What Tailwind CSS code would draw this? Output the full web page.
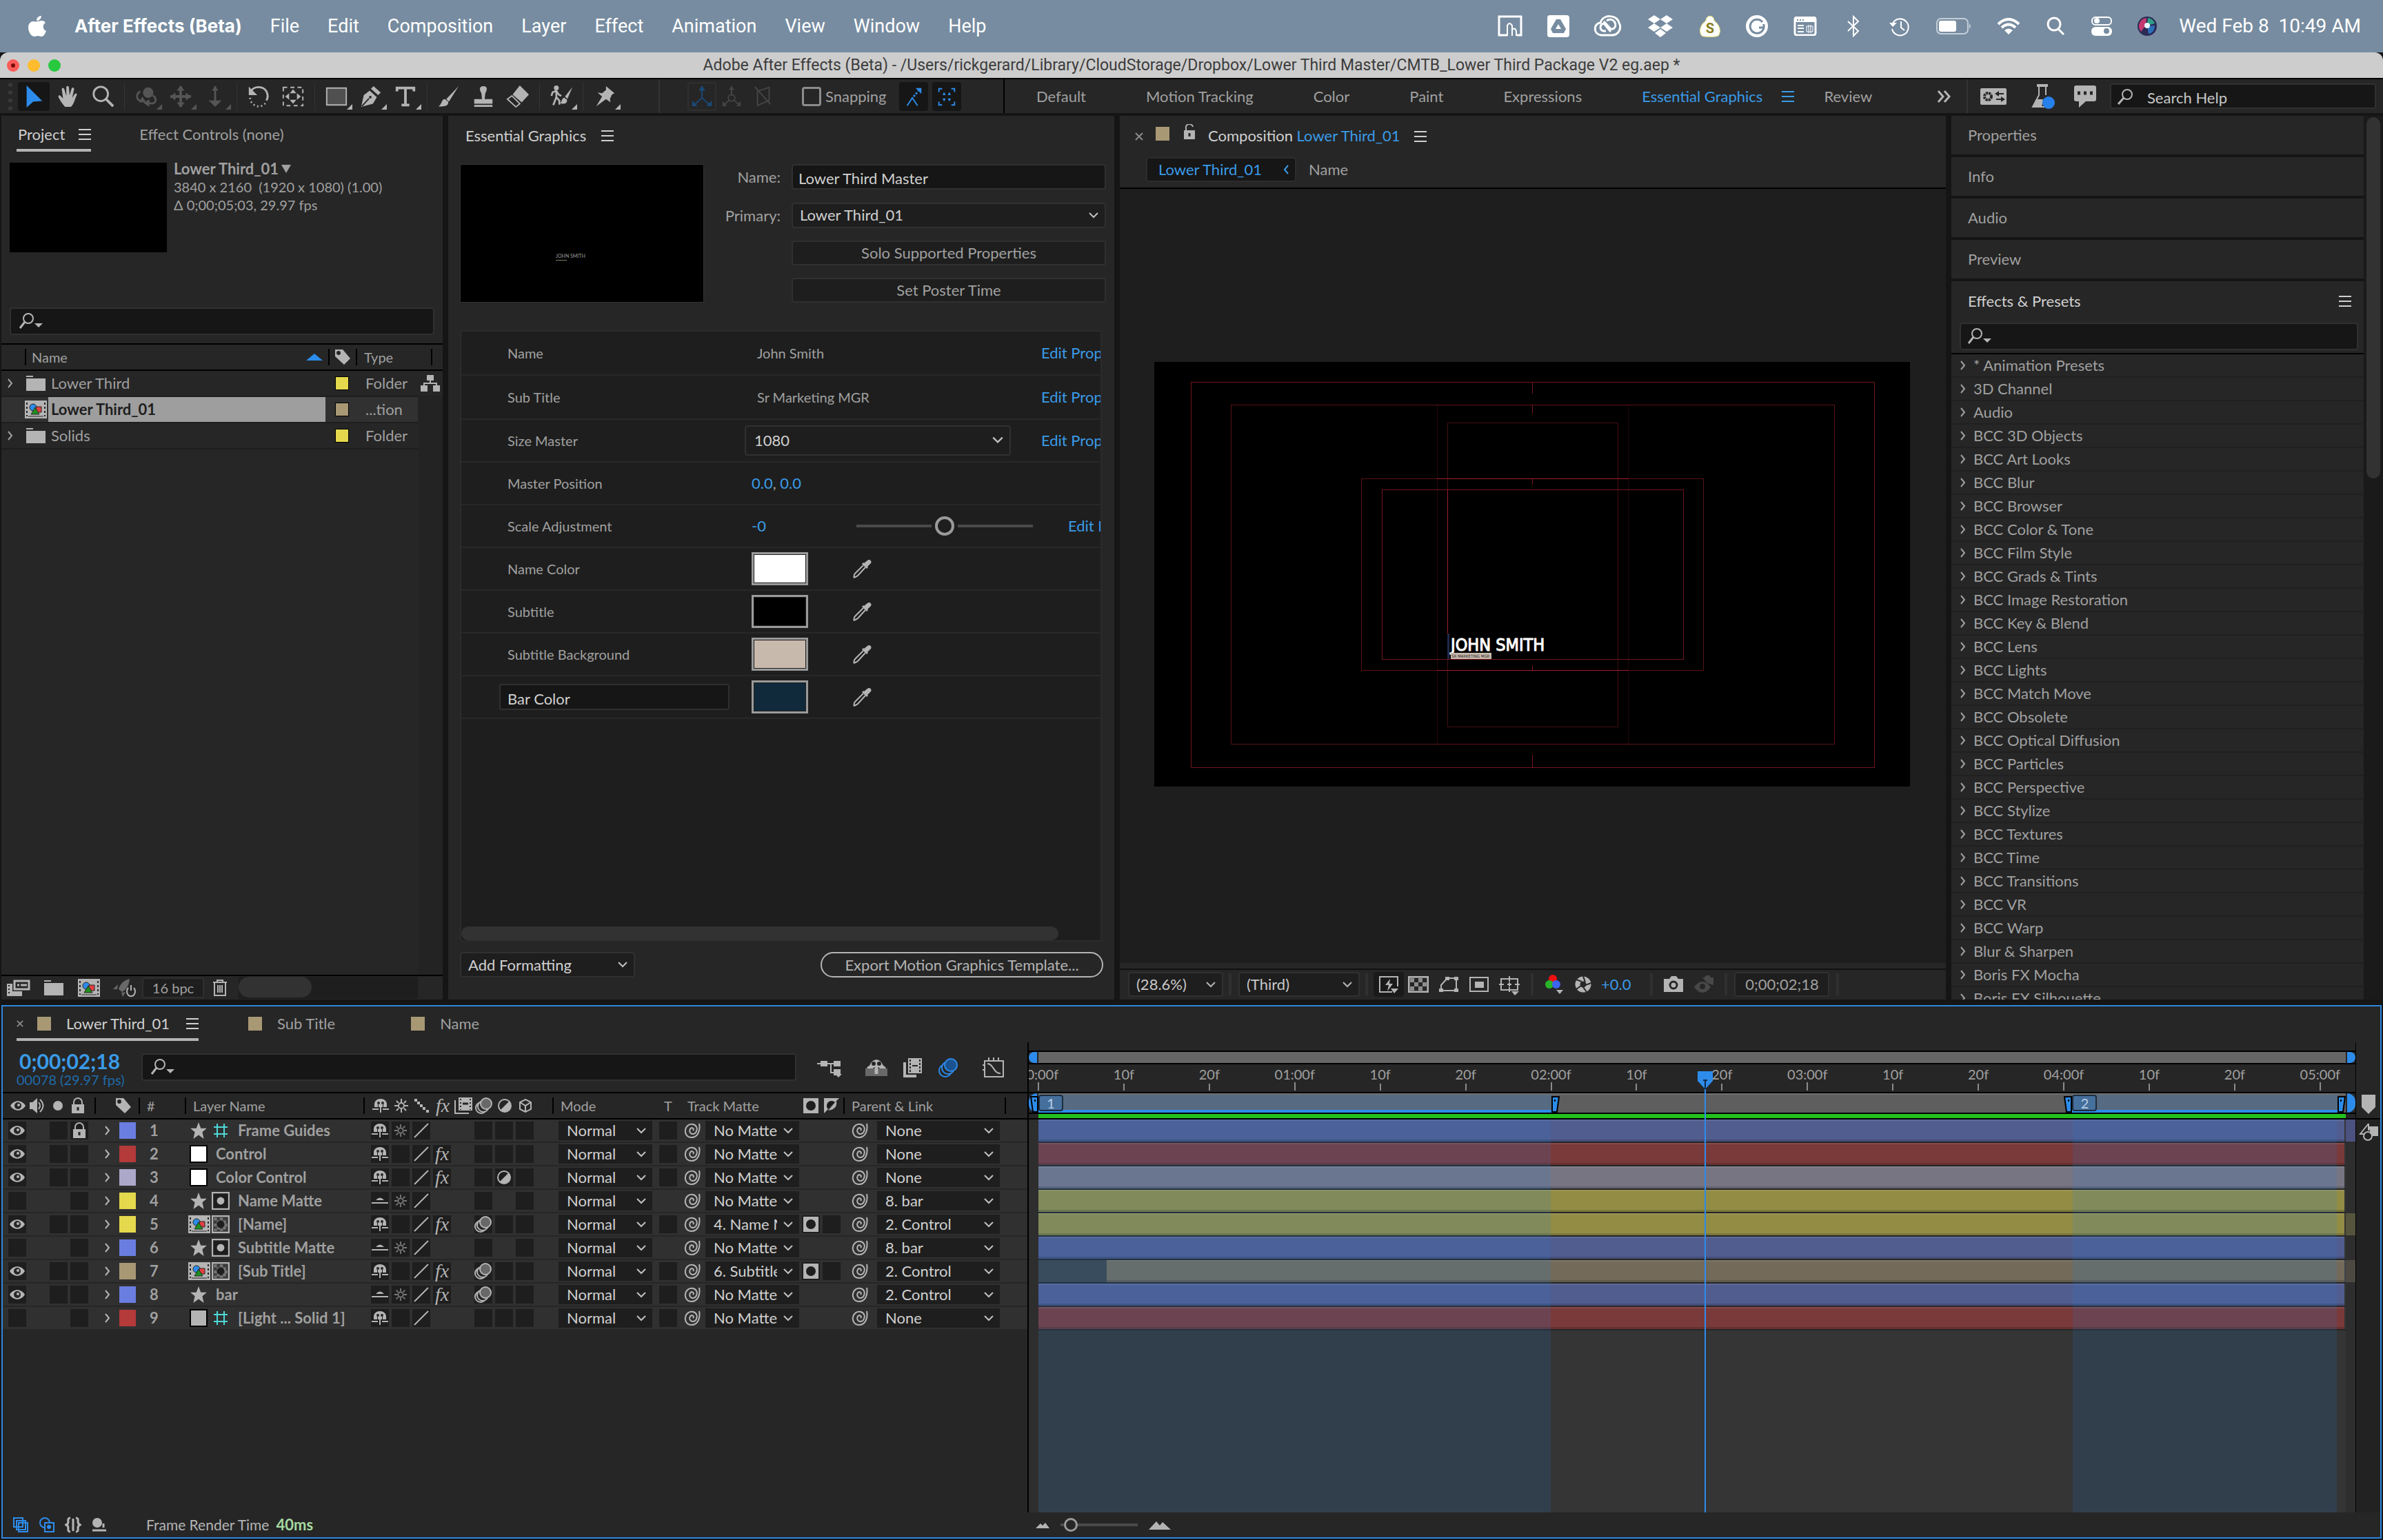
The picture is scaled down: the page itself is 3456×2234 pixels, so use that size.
<!DOCTYPE html>
<html lang="en">
<head>
    <meta charset="UTF-8">
    <meta name="viewport" content="width=device-width, initial-scale=1.0">
    <title>Adobe After Effects (Beta)</title>
    <script src="https://cdn.jsdelivr.net/npm/@tailwindcss/browser@4"></script>
</head>
<body class="h-screen flex flex-col overflow-hidden bg-[#151515] font-['Lato','Noto_Sans',sans-serif] text-[22px] leading-[26px] text-[#a0a0a0]">

    <!-- Icon sprite -->
    <svg class="hidden" aria-hidden="true">
        <symbol id="i-menu" viewBox="0 0 18 16"><path d="M0 1h18M0 8h18M0 15h18" stroke="currentColor" stroke-width="2"/></symbol>
        <symbol id="i-chev" viewBox="0 0 16 16"><path d="M2 5l6 6 6-6" fill="none" stroke="currentColor" stroke-width="2"/></symbol>
        <symbol id="i-right" viewBox="0 0 10 16"><path d="M2 2l5 6-5 6" fill="none" stroke="currentColor" stroke-width="2"/></symbol>
        <symbol id="i-close" viewBox="0 0 12 12"><path d="M1 1l10 10M11 1L1 11" stroke="currentColor" stroke-width="2"/></symbol>
        <symbol id="i-find" viewBox="0 0 34 26"><circle cx="13" cy="9" r="7" fill="none" stroke="currentColor" stroke-width="2"/><path d="M8 14L1 23" stroke="currentColor" stroke-width="3"/><path d="M22 16h12l-6 6z" fill="currentColor"/></symbol>
        <symbol id="i-mag" viewBox="0 0 24 24"><circle cx="15" cy="9" r="7" fill="none" stroke="currentColor" stroke-width="2"/><path d="M10 14L2 23" stroke="currentColor" stroke-width="3"/></symbol>
        <symbol id="i-folder" viewBox="0 0 28 24"><path d="M0 1h10v2H0zM0 5h28v18H0z" fill="currentColor"/></symbol>
        <symbol id="i-comp" viewBox="0 0 32 26"><path d="M0 0h32v26H0z" fill="#b4b4b4"/><path d="M3 3v20M29 3v20" stroke="#262626" stroke-width="2" stroke-dasharray="3 3"/><path d="M5 23h22" stroke="#262626" stroke-width="1"/><circle cx="12" cy="10" r="5" fill="#2d8ceb" stroke="#262626"/><path d="M16 9h8v8h-8z" fill="#e34040" stroke="#262626"/><path d="M15 10l6 10H9z" fill="#1f8f1f" stroke="#262626"/></symbol>
        <symbol id="i-tag" viewBox="0 0 24 24"><path d="M1 1h11l11 13-9 9L1 11z" fill="currentColor"/><circle cx="6" cy="6" r="3" fill="#262626"/></symbol>
        <symbol id="i-flow" viewBox="0 0 28 24"><path d="M9 0h10v8H9zM0 15h10v9H0zM18 15h10v9H18z" fill="currentColor"/><path d="M14 8v4M5 15v-3h18v3" fill="none" stroke="currentColor" stroke-width="2"/></symbol>
        <symbol id="i-interp" viewBox="0 0 34 24"><path d="M11 2h21v12H11z" fill="none" stroke="currentColor" stroke-width="3"/><path d="M15 8h3M20 8h9" stroke="currentColor" stroke-width="3"/><path d="M0 6h8v11h14v7H0z" fill="currentColor"/><path d="M3 8v14" stroke="#262626" stroke-width="2" stroke-dasharray="2 3"/></symbol>
        <symbol id="i-rocket" viewBox="0 0 34 26"><path d="M24 0c-9 2-14 8-16 15l5 4c6-3 10-9 11-19zM7 8l-7 7h6zM12 20l2 6 4-7z" fill="#686868"/><path d="M22 13a6 7 0 1 0 8 0M26 9v8" fill="none" stroke="currentColor" stroke-width="2"/></symbol>
        <symbol id="i-trash" viewBox="0 0 22 26"><path d="M1 5h20M7 5V2h8v3M3 5v19h16V5M8 9v11M11 9v11M14 9v11" fill="none" stroke="currentColor" stroke-width="2"/></symbol>
        <symbol id="i-dropper" viewBox="0 0 28 28"><path d="M16 9L4 21c-2 2-1 5-2 6 2-1 4-1 6-3l11-12" fill="none" stroke="currentColor" stroke-width="2"/><path d="M14 7l7 7 2-2-1-1 5-5c2-3-2-7-5-4l-5 4-1-1z" fill="currentColor"/></symbol>
        <symbol id="i-lock" viewBox="0 0 20 24"><path d="M4 11V7a6 6 0 0 1 12 0v4" fill="none" stroke="currentColor" stroke-width="2"/><path d="M1 10h18v13H1z" fill="currentColor"/><path d="M10 14v5" stroke="#262626" stroke-width="3"/></symbol>
        <symbol id="i-unlock" viewBox="0 0 20 24"><path d="M4 11V6a5 5 0 0 1 10-2" fill="none" stroke="currentColor" stroke-width="2"/><path d="M1 9h16v13H1z" fill="currentColor"/><path d="M9 13v5" stroke="#262626" stroke-width="3"/></symbol>
        <symbol id="i-eye" viewBox="0 0 22 16"><path d="M0 8C5-1 17-1 22 8 17 17 5 17 0 8z" fill="currentColor"/><circle cx="11" cy="8" r="5" fill="#262626"/><circle cx="12" cy="7" r="2" fill="currentColor"/></symbol>
        <symbol id="i-audio" viewBox="0 0 24 24"><path d="M0 7h4l7-6v22l-7-6H0z" fill="currentColor"/><path d="M13 7q4 5 0 10M15 3q9 9 0 18" fill="none" stroke="currentColor" stroke-width="2"/></symbol>
        <symbol id="i-dot" viewBox="0 0 14 14"><circle cx="7" cy="7" r="7" fill="currentColor"/></symbol>
        <symbol id="i-shy" viewBox="0 0 24 20"><path d="M3 12V8C3 3 7 0 12 0s9 3 9 8v4h-5V8h-1v4H9V8H8v4z" fill="currentColor"/><circle cx="9" cy="6" r="2" fill="#262626"/><circle cx="15" cy="6" r="2" fill="#262626"/><path d="M0 15h9M15 15h9M12 10v10" stroke="currentColor" stroke-width="2"/></symbol>
        <symbol id="i-shyoff" viewBox="0 0 24 20"><path d="M6 9q6-7 12 0z" fill="currentColor"/><path d="M0 13h24" stroke="currentColor" stroke-width="2"/></symbol>
        <symbol id="i-sun" viewBox="0 0 22 22"><circle cx="11" cy="11" r="4" fill="none" stroke="currentColor" stroke-width="2"/><path d="M11 1v5M11 16v5M1 11h5M16 11h5M4 4l3 3M15 15l3 3M4 18l3-3M15 7l3-3" stroke="currentColor" stroke-width="2"/></symbol>
        <symbol id="i-steps" viewBox="0 0 22 22"><path d="M0 1h4v4H0zM4 5h4v4H4zM8 9h4v4H8zM12 13h4v4h-4zM17 17h4v4h-4z" fill="currentColor"/></symbol>
        <symbol id="i-slash" viewBox="0 0 22 22"><path d="M1 21L21 1" stroke="currentColor" stroke-width="2"/></symbol>
        <symbol id="i-frames" viewBox="0 0 26 24"><path d="M6 0h20v19H6z" fill="currentColor"/><path d="M1 4v19h20" fill="none" stroke="currentColor" stroke-width="2"/><path d="M9 2v16M23 2v16" stroke="#262626" stroke-width="2" stroke-dasharray="2 3"/><path d="M12 9h8" stroke="#262626" stroke-width="3"/></symbol>
        <symbol id="i-mblur" viewBox="0 0 26 24"><circle cx="9" cy="15" r="8" fill="#262626" stroke="currentColor" stroke-width="2"/><circle cx="12" cy="13" r="8" fill="#262626" stroke="currentColor" stroke-width="2"/><circle cx="16" cy="9" r="8" fill="#686868" stroke="currentColor" stroke-width="2"/></symbol>
        <symbol id="i-mblurb" viewBox="0 0 28 28"><circle cx="10" cy="18" r="9" fill="#262626" stroke="#2d8ceb" stroke-width="2"/><circle cx="14" cy="14" r="9" fill="#262626" stroke="#2d8ceb" stroke-width="2"/><circle cx="18" cy="10" r="9" fill="#1b5390" stroke="#2d8ceb" stroke-width="2"/></symbol>
        <symbol id="i-adj" viewBox="0 0 20 20"><circle cx="10" cy="10" r="9" fill="none" stroke="currentColor" stroke-width="2"/><path d="M17 3A10 10 0 0 1 3 17z" fill="currentColor"/></symbol>
        <symbol id="i-cube" viewBox="0 0 20 20"><path d="M10 1l8 4v10l-8 4-8-4V5zM2 5l8 5 8-5M10 10v9" fill="none" stroke="currentColor" stroke-width="2"/></symbol>
        <symbol id="i-star" viewBox="0 0 24 24"><path d="M12 1l3 8h8l-6 5 2 9-7-5-7 5 2-9-6-5h8z" fill="currentColor"/></symbol>
        <symbol id="i-guide" viewBox="0 0 20 20"><path d="M5 0v20M15 0v20M0 5h20M0 15h20" stroke="#4fd8d8" stroke-width="2"/></symbol>
        <symbol id="i-matte" viewBox="0 0 24 24"><path d="M1 1h22v22H1z" fill="#1e1e1e" stroke="currentColor" stroke-width="2"/><circle cx="12" cy="12" r="5" fill="currentColor"/></symbol>
        <symbol id="i-matted" viewBox="0 0 24 24"><path d="M1 1h22v22H1z" fill="#3c3c3c" stroke="currentColor" stroke-width="2"/><path d="M3 3h4v4H3zM11 3h4v4h-4zM7 7h4v4H7zM15 7h4v4h-4zM3 11h4v4H3zM17 11h4v4h-4zM7 15h4v4H7zM15 15h4v4h-4zM11 18h4v3h-4zM3 18h4v3H3z" fill="#747474"/><circle cx="12" cy="12" r="5" fill="#1e1e1e"/></symbol>
        <symbol id="i-hole" viewBox="0 0 22 22"><path d="M0 0h22v22H0z" fill="currentColor"/><circle cx="11" cy="11" r="7" fill="#1e1e1e"/></symbol>
        <symbol id="i-holeinv" viewBox="0 0 22 22"><path d="M0 0h22L0 22z" fill="currentColor"/><path d="M16 6A7 7 0 0 0 6 16z" fill="#1a1a1a"/><path d="M18 4q2 12-12 14z" fill="currentColor"/></symbol>
        <symbol id="i-whip" viewBox="0 0 24 24"><path d="M22 2c2 10-2 20-11 20C4 22 1 16 2 11 3 5 8 2 13 3c5 1 7 6 5 10-1 4-6 5-8 3-3-2-2-7 1-8 2 0 4 2 2 4" fill="none" stroke="currentColor" stroke-width="2"/></symbol>

        <!-- tools -->
        <symbol id="t-select" viewBox="0 0 34 36"><path d="M6 1l24 24-14 1-10 9z" fill="#2d8ceb"/></symbol>
        <symbol id="t-hand" viewBox="0 0 34 36"><path d="M12 34C7 28 4 23 2 19c-1-3 2-4 4-1l3 3L7 7c0-3 3-3 4 0l3 10V4c0-3 4-3 4 0l1 12 3-10c1-3 4-2 4 1l-3 13 4-6c2-2 4 0 3 2-3 6-4 14-9 18z" fill="currentColor"/></symbol>
        <symbol id="t-zoom" viewBox="0 0 34 36"><circle cx="14" cy="14" r="11" fill="none" stroke="currentColor" stroke-width="3"/><path d="M22 22l11 11" stroke="currentColor" stroke-width="4"/></symbol>
        <symbol id="t-orbit" viewBox="0 0 34 36"><circle cx="20" cy="12" r="8" fill="currentColor"/><path d="M8 10c-8 5-6 14 2 15M27 16c8 6 5 15-6 12" fill="none" stroke="currentColor" stroke-width="3"/><path d="M6 27l11 0-6-9zM22 34v-12l-9 6z" fill="currentColor"/></symbol>
        <symbol id="t-pan" viewBox="0 0 34 36"><path d="M17 2v32M1 18h32" stroke="currentColor" stroke-width="4"/><path d="M17 1l6 8H11zM17 35l6-8H11zM1 18l8-6v12zM33 18l-8-6v12z" fill="currentColor"/></symbol>
        <symbol id="t-dolly" viewBox="0 0 34 36"><path d="M17 2v28" stroke="currentColor" stroke-width="3"/><path d="M17 2l5 7H12zM17 34l10-10H7z" fill="currentColor"/></symbol>
        <symbol id="t-rotate" viewBox="0 0 34 36"><path d="M5 10C11 1 24 2 29 10c3 6 2 11 0 14" fill="none" stroke="currentColor" stroke-width="3"/><path d="M2 3v13h13z" fill="currentColor"/><path d="M4 20c1 14 18 18 25 6" fill="none" stroke="currentColor" stroke-width="3" stroke-dasharray="2 4"/></symbol>
        <symbol id="t-anchor" viewBox="0 0 34 36"><path d="M2 4h30v28H2z" fill="none" stroke="currentColor" stroke-width="2" stroke-dasharray="6 5"/><path d="M17 7l5 6H12zM17 29l5-6H12zM5 18l6-5v10zM29 18l-6-5v10z" fill="currentColor"/></symbol>
        <symbol id="t-rect" viewBox="0 0 34 36"><path d="M2 5h30v26H2z" fill="#505050" stroke="currentColor" stroke-width="2"/></symbol>
        <symbol id="t-pen" viewBox="0 0 34 36"><path d="M21 2l11 10-4 4-11-10zM15 9l11 10-6 10L2 34 6 16z" fill="currentColor"/><path d="M3 33l11-12" stroke="#262626" stroke-width="2"/><circle cx="16" cy="19" r="2" fill="#262626"/></symbol>
        <symbol id="t-type" viewBox="0 0 34 36"><path d="M4 10V5h26v5M17 5v26M11 31h12" fill="none" stroke="currentColor" stroke-width="4"/></symbol>
        <symbol id="t-brush" viewBox="0 0 34 36"><path d="M32 2L13 22l4 4zM11 22c-6 0-4 8-10 11 8 1 16 0 15-7z" fill="currentColor"/></symbol>
        <symbol id="t-stamp" viewBox="0 0 34 36"><path d="M17 2c7 0 6 6 3 11l-1 9h12v7H3v-7h12l-1-9c-3-5-4-11 3-11zM3 31h28v3H3z" fill="currentColor"/></symbol>
        <symbol id="t-eraser" viewBox="0 0 34 36"><path d="M20 1l14 14-11 12L9 15z" fill="currentColor"/><path d="M8 17l12 12-6 5L1 22z" fill="none" stroke="currentColor" stroke-width="2"/></symbol>
        <symbol id="t-roto" viewBox="0 0 38 36"><circle cx="11" cy="4" r="4" fill="currentColor"/><path d="M11 9v11M3 17l2-6 6-2 4 6 4 2M11 19l-5 13M11 19l5 6v6" fill="none" stroke="currentColor" stroke-width="3"/><path d="M37 3L25 18l4 4zM24 20c-5 1-3 6-7 9 6 2 13 0 11-6z" fill="currentColor"/></symbol>
        <symbol id="t-pin" viewBox="0 0 34 36"><path d="M19 2l13 11-4 2-3 7 1 5-7-5L4 33l9-15-7-6 7 1 6-5z" fill="currentColor"/></symbol>
        <symbol id="t-axis" viewBox="0 0 34 36"><path d="M17 4v17M17 20L5 31M17 20l12 11" stroke="currentColor" stroke-width="2"/><path d="M17 1l5 8H12zM2 33v-9l8 9zM32 33v-9l-8 9z" fill="currentColor"/></symbol>
        <symbol id="t-world" viewBox="0 0 34 36"><path d="M17 4v13M13 24l-8 7M21 24l8 7" stroke="currentColor" stroke-width="2"/><circle cx="17" cy="20" r="5" fill="none" stroke="currentColor" stroke-width="2"/><path d="M17 1l4 7h-8zM3 33v-8l7 8zM31 33v-8l-7 8z" fill="currentColor"/></symbol>
        <symbol id="t-view" viewBox="0 0 34 36"><path d="M8 10l18-6v20L8 32zM4 3l24 27" fill="none" stroke="currentColor" stroke-width="2"/></symbol>
        <symbol id="t-snap" viewBox="0 0 34 36"><path d="M7 32l8-12 8 12" fill="none" stroke="currentColor" stroke-width="2"/><path d="M17 18l7-8" stroke="currentColor" stroke-width="3" stroke-dasharray="3 2"/><path d="M20 5h9v9z" fill="currentColor"/></symbol>
        <symbol id="t-snapbox" viewBox="0 0 34 36"><path d="M5 11V6h5M24 6h5v5M5 26v5h5M24 31h5v-5M13 15v-3M21 15v-3M13 25v-3M21 25v-3M11 15h4M19 15h4M11 22h4M19 22h4" fill="none" stroke="currentColor" stroke-width="2"/></symbol>
    </svg>

    <!-- macOS menu bar -->
    <header class="h-[76px] shrink-0 flex items-center bg-[#778ca0] text-white font-['Roboto',sans-serif] text-[27px] pl-10 pr-8">
        <svg class="w-7 h-8 mr-10" viewBox="0 0 28 32"><path d="M20 1c0 4-3 7-7 7 0-4 3-7 7-7zM14 9c2 0 4-1 6-1 3 0 5 1 6 3-5 3-4 10 1 12-2 5-4 8-7 8-2 0-3-1-5-1s-3 1-5 1C5 31 1 24 1 18c0-6 4-9 7-9 2 0 4 1 6 0z" fill="#fff"/></svg>
        <nav class="flex gap-[41px]">
            <a href="#" class="font-['Inter',sans-serif] text-[26px] font-bold">After Effects (Beta)</a>
            <a href="#">File</a>
            <a href="#">Edit</a>
            <a href="#">Composition</a>
            <a href="#">Layer</a>
            <a href="#">Effect</a>
            <a href="#">Animation</a>
            <a href="#">View</a>
            <a href="#">Window</a>
            <a href="#">Help</a>
        </nav>
        <div class="ml-auto flex items-center gap-9">
            <svg class="w-9 h-8" viewBox="0 0 36 32"><path d="M14 29H2V2h32v27h-6" fill="none" stroke="#fff" stroke-width="3"/><path d="M14 30V15q3-6 7 0v15M21 21q5-4 6 3v6" fill="none" stroke="#fff" stroke-width="2"/></svg>
            <svg class="size-8" viewBox="0 0 32 32"><rect width="32" height="32" rx="4" fill="#fff"/><path d="M13 6h6l8 14-3 6H8l-3-6z" fill="#778ca0"/><path d="M16 13l4 7h-8z" fill="#fff"/></svg>
            <svg class="w-10 h-8" viewBox="0 0 40 32"><path d="M10 29C-2 27-1 12 9 11 13-2 33-1 36 11c5 9-2 18-10 18z" fill="none" stroke="#fff" stroke-width="3"/><path d="M24 24L14 12c-6 1-7 10 0 11h3M18 8c10-7 18 8 9 12h-3L14 9" fill="none" stroke="#fff" stroke-width="3"/></svg>
            <svg class="w-10 h-8" viewBox="0 0 40 32"><path d="M11 0l9 6-9 6-9-6zM29 0l9 6-9 6-9-6zM11 12l9 6-9 6-9-6zM29 12l9 6-9 6-9-6zM20 20l8 6-8 6-8-6z" fill="#fff"/></svg>
            <svg class="size-8" viewBox="0 0 32 32"><path d="M10 8c0-9 12-9 12 0 6 4 12 14 6 22-4 2-20 2-24 0-6-8 0-18 6-22z" fill="#fff" stroke="#e6dc6a"/><text x="16" y="26" text-anchor="middle" font-family="Roboto" font-size="20" font-weight="bold" fill="#8a7f20">S</text></svg>
            <svg class="size-8" viewBox="0 0 32 32"><circle cx="16" cy="16" r="16" fill="#fff"/><path d="M24 10a10 10 0 1 0 2 8h-7M26 13v6" fill="none" stroke="#778ca0" stroke-width="3"/></svg>
            <svg class="w-9 h-7" viewBox="0 0 36 28"><rect x="3" y="1" width="30" height="26" rx="3" fill="none" stroke="#fff" stroke-width="3"/><path d="M3 2h30v6H3z" fill="#fff"/><path d="M6 5h2M10 5h2M14 5h2" stroke="#778ca0" stroke-width="2"/><path d="M7 13h9M7 17h9M7 22h9" stroke="#fff" stroke-width="2"/><path d="M20 14h9v8h-9zM23 12v12M26 12v12" fill="none" stroke="#fff" stroke-width="1"/></svg>
            <svg class="size-8" viewBox="0 0 32 32"><path d="M8 9l15 14-7 7V2l7 7L8 23" fill="none" stroke="#fff" stroke-width="2"/></svg>
            <svg class="size-8" viewBox="0 0 32 32"><path d="M5 12a12 12 0 1 1-1 8M17 9v9l5 4" fill="none" stroke="#fff" stroke-width="2"/><path d="M0 11h11l-6 6z" fill="#fff"/></svg>
            <svg class="w-13 h-6" viewBox="0 0 52 24"><rect x="1" y="1" width="45" height="22" rx="6" fill="none" stroke="#c4ced8" stroke-width="2"/><rect x="4" y="4" width="25" height="16" rx="3" fill="#fff"/><path d="M48 8q4 4 0 8z" fill="#c4ced8"/></svg>
            <svg class="w-[34px] h-6" viewBox="0 0 34 24"><path d="M2 9Q17-5 32 9M7 14q10-9 20 0" fill="none" stroke="#fff" stroke-width="4"/><path d="M11 18q6-5 12 0l-6 6z" fill="#fff"/></svg>
            <svg class="w-[30px] h-7" viewBox="0 0 30 28"><circle cx="13" cy="11" r="9" fill="none" stroke="#fff" stroke-width="3"/><path d="M19 18l8 8" stroke="#fff" stroke-width="3"/></svg>
            <svg class="w-8 h-7" viewBox="0 0 32 28"><rect x="2" y="1" width="28" height="11" rx="5" fill="none" stroke="#fff" stroke-width="2"/><circle cx="9" cy="6" r="4" fill="#fff"/><rect x="1" y="15" width="30" height="13" rx="6" fill="#fff"/><circle cx="23" cy="21" r="4" fill="#778ca0"/></svg>
            <svg class="size-7" viewBox="0 0 28 28"><circle cx="14" cy="14" r="14" fill="#2a2a55"/><path d="M13 2a12 12 0 0 0-8 20l7-9z" fill="#c23a70"/><path d="M15 2a12 12 0 0 1 10 8l-11 3z" fill="#2f9e86"/><path d="M25 13c0 7-4 12-9 12l-2-11z" fill="#2c6fb8"/><circle cx="14" cy="13" r="4" fill="#e8f4ff"/></svg>
            <span class="whitespace-pre -ml-1 text-[28px]">Wed Feb 8  10:49 AM</span>
        </div>
    </header>

    <!-- Window title bar -->
    <div class="h-[39px] shrink-0 relative flex items-center justify-center bg-[#cdcdcd] border-b-2 border-black rounded-t-xl font-['Roboto',sans-serif] text-[23px] text-[#3c3c3c]">
        <div class="absolute left-2.5 flex gap-3">
            <span class="size-[18px] rounded-full bg-[#fc5b57] flex items-center justify-center"><span class="size-1.5 rounded-full bg-[#7a0d0a]"></span></span>
            <span class="size-[18px] rounded-full bg-[#fdbc2e]"></span>
            <span class="size-[18px] rounded-full bg-[#28c83f]"></span>
        </div>
        <h1>Adobe After Effects (Beta) - /Users/rickgerard/Library/CloudStorage/Dropbox/Lower Third Master/CMTB_Lower Third Package V2 eg.aep *</h1>
    </div>

    <!-- Tools -->
    <div class="h-[49px] shrink-0 flex bg-[#262626] mb-1 text-[#b4b4b4]">
        <div id="tools" class="w-[957px] flex items-center pl-3 border-r-2 border-[#343434]"></div>
        <div class="w-[500px] flex items-center pl-10 border-r-2 border-black">
            <button class="w-[42px] h-[42px] flex items-center justify-center rounded border-2 border-[#2f2f2f] text-[#1b4a78]" aria-label="Local axis"><svg class="w-8 h-[34px]"><use href="#t-axis"/></svg></button>
            <button class="w-11 flex justify-center text-[#454545]" aria-label="World axis"><svg class="w-8 h-[34px]"><use href="#t-world"/></svg></button>
            <button class="w-12 flex justify-center text-[#454545]" aria-label="View axis"><svg class="w-8 h-[34px]"><use href="#t-view"/></svg></button>
            <label class="ml-8 flex items-center gap-1.5 text-[#a0a0a0]"><input type="checkbox" class="appearance-none size-7 rounded border-3 border-[#8c8c8c]">Snapping</label>
            <button class="ml-[18px] w-[42px] h-[42px] flex items-center justify-center rounded bg-[#161616] text-[#2d8ceb]" aria-label="Snap edges"><svg class="w-8 h-[34px]"><use href="#t-snap"/></svg></button>
            <button class="ml-1.5 w-[42px] h-[42px] flex items-center justify-center rounded bg-[#161616] text-[#2d8ceb]" aria-label="Snap box"><svg class="w-8 h-[34px]"><use href="#t-snapbox"/></svg></button>
        </div>
        <nav class="flex items-center gap-[87px] pl-[46px] text-[#a0a0a0]">
            <a href="#">Default</a>
            <a href="#">Motion Tracking</a>
            <a href="#">Color</a>
            <a href="#">Paint</a>
            <a href="#">Expressions</a>
            <span class="flex items-center gap-7 -mr-11 text-[#3a9be8]"><a href="#">Essential Graphics</a><svg class="w-[18px] h-4"><use href="#i-menu"/></svg></span>
            <a href="#">Review</a>
        </nav>
        <div class="ml-auto flex items-center pr-2.5">
            <button class="mr-5" aria-label="More workspaces"><svg class="w-6 h-5" viewBox="0 0 24 20"><path d="M3 2l7 8-7 8M12 2l7 8-7 8" fill="none" stroke="currentColor" stroke-width="3"/></svg></button>
            <span class="w-0.5 h-[49px] bg-[#343434] mr-[18px]"></span>
            <svg class="w-[38px] h-6 mr-9" viewBox="0 0 38 24"><rect width="38" height="24" rx="2" fill="currentColor"/><circle cx="11" cy="12" r="5" fill="none" stroke="#262626" stroke-width="4" stroke-dasharray="3 1"/><path d="M23 8h11M23 16h11" stroke="#262626" stroke-width="2"/><path d="M27 4v8l-6-4zM30 12v8l6-4z" fill="#262626"/></svg>
            <svg class="w-[34px] h-9 mr-7" viewBox="0 0 34 36"><path d="M8 2h16" stroke="currentColor" stroke-width="4"/><path d="M11 3v13L2 33h20M21 3v13" fill="none" stroke="currentColor" stroke-width="2"/><path d="M8 22h9l-2 12H2z" fill="currentColor"/><circle cx="25" cy="27" r="9" fill="#2680eb"/></svg>
            <svg class="w-8 h-9 mr-5" viewBox="0 0 32 36"><path d="M3 2h26q3 0 3 3v17q0 3-3 3H17L7 34v-9H3q-3 0-3-3V5q0-3 3-3z" fill="currentColor"/><path d="M5 13h4M14 13h4M23 13h4" stroke="#262626" stroke-width="5"/></svg>
            <label class="w-[386px] h-[37px] flex items-center gap-5 pl-2 rounded bg-[#161616] border-2 border-[#303030]">
                <svg class="size-6"><use href="#i-mag"/></svg>
                <input type="text" placeholder="Search Help" aria-label="Search Help" class="w-64 pt-1 bg-transparent placeholder:text-[#c8c8c8]">
            </label>
        </div>
    </div>

    <!-- Upper panels -->
    <main class="flex-1 min-h-0 grid grid-cols-[640px_966px_minmax(0,1fr)_626px] grid-rows-[minmax(0,1fr)] gap-x-2 pl-0.5 mb-2">

        <!-- Project -->
        <section class="flex flex-col bg-[#262626]">
            <div class="h-[52px] shrink-0 flex items-end">
                <div class="ml-[22px] pl-0.5 h-[46px] flex items-center gap-5 border-b-4 border-[#b4b4b4] text-[#d0d0d0]"><h2>Project</h2><svg class="w-[18px] h-4"><use href="#i-menu"/></svg></div>
                <button class="h-[46px] pb-1 ml-[70px]">Effect Controls (none)</button>
            </div>
            <div class="flex gap-2.5 mt-4 ml-3 h-[130px]">
                <div class="w-[228px] h-[130px] bg-black"></div>
                <div class="text-[20px] -mt-1">
                    <p class="text-[22px] font-bold flex items-center gap-1">Lower Third_01<svg class="w-3.5 h-3.5" viewBox="0 0 14 14"><path d="M0 1h14L7 13z" fill="currentColor"/></svg></p>
                    <p class="whitespace-pre">3840 x 2160  (1920 x 1080) (1.00)</p>
                    <p>Δ 0;00;05;03, 29.97 fps</p>
                </div>
            </div>
            <label class="mt-[80px] ml-3 mr-3 h-10 shrink-0 flex items-center pl-3 gap-2 rounded bg-[#161616] border-2 border-[#303030] text-[#b4b4b4]">
                <svg class="w-[34px] h-[26px]"><use href="#i-find"/></svg><input type="text" aria-label="Search project" class="flex-1 bg-transparent">
            </label>
            <div class="flex mt-3 flex-1 border-b-2 border-black">
                <table class="w-[604px] self-start table-fixed border-separate border-spacing-0 text-left">
                    <colgroup><col class="w-[34px]"><col class="w-[440px]"><col class="w-[42px]"><col></colgroup>
                    <thead class="text-[20px]">
                        <tr class="h-10">
                            <th class="border-y-2 border-black"></th>
                            <th class="border-y-2 border-black p-0 font-normal"><div class="h-6 leading-6 border-l-2 border-black pl-2 pr-2 flex items-center justify-between">Name<svg class="w-6 h-2.5" viewBox="0 0 24 10"><path d="M0 10L12 0l12 10z" fill="#2d8ceb"/></svg></div></th>
                            <th class="border-y-2 border-black p-0"><div class="h-6 border-x-2 border-black flex justify-center text-[#b4b4b4]"><svg class="size-6"><use href="#i-tag"/></svg></div></th>
                            <th class="border-y-2 border-black p-0 pl-2.5 font-normal">Type</th>
                        </tr>
                    </thead>
                    <tbody>
                        <tr class="h-[38px]">
                            <td class="border-b-2 border-[#1e1e1e] p-0 pl-2"><svg class="w-2.5 h-4"><use href="#i-right"/></svg></td>
                            <td class="border-b-2 border-[#1e1e1e] p-0"><div class="flex items-center gap-2 pl-0.5"><svg class="w-7 h-6 text-[#b4b4b4]"><use href="#i-folder"/></svg>Lower Third</div></td>
                            <td class="border-b-2 border-[#1e1e1e] p-0"><div class="size-5 ml-2.5 bg-[#e4d84c] border border-black"></div></td>
                            <td class="border-b-2 border-[#1e1e1e] p-0 pl-3">Folder</td>
                        </tr>
                        <tr class="h-[38px] bg-[#313131]">
                            <td class="border-b-2 border-[#1e1e1e] p-0"></td>
                            <td class="border-b-2 border-[#1e1e1e] p-0"><div class="flex items-center"><svg class="w-8 h-[26px]"><use href="#i-comp"/></svg><span class="ml-0.5 flex-1 h-9 leading-9 pl-1 mr-1 bg-[#9e9e9e] text-[#1e1e1e] font-bold">Lower Third_01</span></div></td>
                            <td class="border-b-2 border-[#1e1e1e] p-0"><div class="size-5 ml-2.5 bg-[#a89874] border border-black"></div></td>
                            <td class="border-b-2 border-[#1e1e1e] p-0 pl-3">...tion</td>
                        </tr>
                        <tr class="h-[38px]">
                            <td class="border-b-2 border-[#1e1e1e] p-0 pl-2"><svg class="w-2.5 h-4"><use href="#i-right"/></svg></td>
                            <td class="border-b-2 border-[#1e1e1e] p-0"><div class="flex items-center gap-2 pl-0.5"><svg class="w-7 h-6 text-[#b4b4b4]"><use href="#i-folder"/></svg>Solids</div></td>
                            <td class="border-b-2 border-[#1e1e1e] p-0"><div class="size-5 ml-2.5 bg-[#e4d84c] border border-black"></div></td>
                            <td class="border-b-2 border-[#1e1e1e] p-0 pl-3">Folder</td>
                        </tr>
                    </tbody>
                </table>
                <div class="flex-1 bg-[#232323]">
                    <div class="h-10 pl-[19px] pt-1.5 bg-[#262626] border-y-2 border-black"><div class="w-0.5 h-6 bg-black"></div></div>
                    <button class="w-full h-9 flex items-center justify-center bg-[#262626] text-[#b4b4b4]" aria-label="Flowchart"><svg class="w-7 h-6"><use href="#i-flow"/></svg></button>
                </div>
            </div>
            <div class="h-[34px] shrink-0 flex items-center pl-2 text-[#b4b4b4]">
                <button aria-label="Interpret footage"><svg class="w-[34px] h-6"><use href="#i-interp"/></svg></button>
                <button class="ml-5" aria-label="New folder"><svg class="w-7 h-6"><use href="#i-folder"/></svg></button>
                <button class="ml-5" aria-label="New composition"><svg class="w-[34px] h-[26px]"><use href="#i-comp"/></svg></button>
                <button class="ml-[18px]" aria-label="Project settings"><svg class="w-[34px] h-[26px]"><use href="#i-rocket"/></svg></button>
                <button class="ml-2 w-[90px] h-[30px] leading-6 rounded bg-[#1e1e1e] border-2 border-[#2f2f2f] text-[20px] text-[#a0a0a0]">16 bpc</button>
                <button class="ml-3" aria-label="Delete"><svg class="w-[22px] h-[26px]"><use href="#i-trash"/></svg></button>
                <div class="ml-4 w-[260px] h-8 bg-[#1e1e1e]"><div class="w-[106px] h-[30px] rounded-full bg-[#323232]"></div></div>
            </div>
        </section>

        <!-- Essential Graphics -->
        <section class="flex flex-col bg-[#262626] pl-[17px] pr-3">
            <div class="h-[58px] shrink-0 flex items-center gap-[22px] pl-2 text-[#d0d0d0]"><h2>Essential Graphics</h2><svg class="w-[18px] h-4"><use href="#i-menu"/></svg></div>
            <div class="flex mt-3">
                <div class="w-[354px] h-[201px] bg-black border border-[#333] relative">
                    <div class="absolute left-[138px] top-[126px] text-[7px] leading-3 text-[#9a9a9a]">JOHN SMITH<div class="w-4 h-px bg-[#7a7a6a]"></div></div>
                </div>
                <div class="flex-1 ml-4 grid grid-cols-[95px_1fr] gap-x-4 gap-y-[17px]">
                    <label for="egp-name" class="text-right leading-[38px]">Name:</label>
                    <input id="egp-name" type="text" value="Lower Third Master" class="h-[37px] rounded bg-[#161616] border-2 border-[#303030] pl-2 pt-1 text-[#d0d0d0]">
                    <label for="egp-primary" class="text-right leading-[38px]">Primary:</label>
                    <div class="relative">
                        <select id="egp-primary" class="appearance-none w-full h-[37px] rounded bg-[#1e1e1e] border-2 border-[#303030] pl-2.5 text-[#d0d0d0]"><option>Lower Third_01</option></select>
                        <svg class="absolute right-2.5 top-2.5 size-4 text-[#c0c0c0]"><use href="#i-chev"/></svg>
                    </div>
                    <button class="col-start-2 h-9 rounded bg-[#1e1e1e] border-2 border-[#303030]">Solo Supported Properties</button>
                    <button class="col-start-2 h-9 rounded bg-[#1e1e1e] border-2 border-[#303030]">Set Poster Time</button>
                </div>
            </div>
            <div class="mt-10 mr-1.5 flex-1 flex flex-col justify-between overflow-hidden rounded bg-[#1e1e1e] border-2 border-[#2b2b2b]">
                <div class="text-[20px]">
                    <div class="h-16 grid grid-cols-[421px_420px_1fr] items-center border-b-2 border-[#282828]"><span class="pl-[67px]">Name</span><span class="pl-2">John Smith</span><a href="#" class="whitespace-nowrap text-[22px] text-[#3a9be8]">Edit Prop</a></div>
                    <div class="h-16 grid grid-cols-[421px_420px_1fr] items-center border-b-2 border-[#282828]"><span class="pl-[67px]">Sub Title</span><span class="pl-2">Sr Marketing MGR</span><a href="#" class="whitespace-nowrap text-[22px] text-[#3a9be8]">Edit Prop</a></div>
                    <div class="h-[62px] grid grid-cols-[411px_430px_1fr] items-center border-b-2 border-[#282828]"><label for="size-master" class="pl-[67px]">Size Master</label>
                        <div class="relative w-[386px]">
                            <select id="size-master" class="appearance-none w-full h-11 rounded bg-[#1e1e1e] border-2 border-[#303030] pl-3 text-[22px] text-[#d0d0d0]"><option>1080</option></select>
                            <svg class="absolute right-2.5 top-3 size-[18px] text-[#c0c0c0]"><use href="#i-chev"/></svg>
                        </div>
                        <a href="#" class="whitespace-nowrap text-[22px] text-[#3a9be8]">Edit Prop</a></div>
                    <div class="h-[62px] grid grid-cols-[421px_1fr] items-center border-b-2 border-[#282828]"><span class="pl-[67px]">Master Position</span><span class="text-[22px] text-[#3a9be8]">0.0<span class="text-[#a0a0a0]">,</span> 0.0</span></div>
                    <div class="h-[62px] grid grid-cols-[421px_152px_307px_1fr] items-center border-b-2 border-[#282828]"><label for="scale-adj" class="pl-[67px]">Scale Adjustment</label><span class="text-[22px] text-[#3a9be8]">-0</span><input id="scale-adj" type="range" value="50" class="appearance-none w-64 h-1 bg-[#4a4a4a] [&::-webkit-slider-thumb]:appearance-none [&::-webkit-slider-thumb]:size-7 [&::-webkit-slider-thumb]:rounded-full [&::-webkit-slider-thumb]:bg-[#1e1e1e] [&::-webkit-slider-thumb]:border-4 [&::-webkit-slider-thumb]:border-[#9a9a9a] [&::-webkit-slider-thumb]:shadow-[0_0_0_5px_#1e1e1e]"><a href="#" class="whitespace-nowrap text-[22px] text-[#3a9be8]">Edit P</a></div>
                    <div id="swatches"></div>
                </div>
                <div class="w-[866px] h-5 rounded-full bg-[#323232]"></div>
            </div>
            <div class="h-[84px] shrink-0 flex items-start justify-between pt-[15px]">
                <div class="relative">
                    <select aria-label="Add Formatting" class="appearance-none w-[254px] h-[37px] rounded bg-[#1e1e1e] border-2 border-[#303030] pl-2.5 text-[#d0d0d0]"><option>Add Formatting</option></select>
                    <svg class="absolute right-2.5 top-2.5 size-4 text-[#c0c0c0]"><use href="#i-chev"/></svg>
                </div>
                <button class="mr-1 w-[410px] h-[37px] rounded-full border-2 border-[#b4b4b4] text-[#b4b4b4]">Export Motion Graphics Template...</button>
            </div>
        </section>

        <!-- Composition viewer -->
        <section class="flex flex-col bg-[#262626]">
            <div class="h-[54px] shrink-0 flex items-end pb-3 pl-[22px] text-[#d0d0d0]">
                <button aria-label="Close" class="mb-1.5"><svg class="size-3 text-[#8c8c8c]"><use href="#i-close"/></svg></button>
                <span class="ml-[18px] mb-1.5 size-5 bg-[#a89874]"></span>
                <svg class="ml-5 mb-1.5 w-5 h-6 text-[#b4b4b4]"><use href="#i-unlock"/></svg>
                <h2 class="ml-4">Composition <span class="text-[#3a9be8]">Lower Third_01</span></h2>
                <svg class="ml-5 mb-1 w-[18px] h-4"><use href="#i-menu"/></svg>
            </div>
            <div class="h-[50px] shrink-0 flex items-center pl-[38px] pb-2.5">
                <button class="w-[218px] h-9 mt-2 flex items-center justify-between pl-4 pr-2 rounded bg-[#161616] border-2 border-[#2c2c2c] text-[#3a9be8]">Lower Third_01<svg class="w-2.5 h-4 rotate-180"><use href="#i-right"/></svg></button>
                <button class="ml-[18px] mt-2">Name</button>
            </div>
            <div class="flex-1 min-h-0 pl-[50px] pr-[52px] pb-1.5 flex items-center justify-center border-t-2 border-black bg-[#1e1e1e]">
                <svg class="w-full" viewBox="0 0 1096 616">
                    <rect width="1096" height="616"/>
                    <g fill="none" stroke="#7d1820" shape-rendering="crispEdges">
                        <rect x="53" y="29" width="991" height="559" opacity=".9"/>
                        <rect x="111" y="62" width="875" height="492" opacity=".7"/>
                        <rect x="300" y="169" width="496" height="278" opacity=".7"/>
                        <rect x="330" y="185" width="437" height="246" opacity=".9"/>
                        <rect x="410" y="62" width="277" height="492" opacity=".3"/>
                        <rect x="425" y="88" width="247" height="441" opacity=".55"/>
                        <path d="M548 29v17M548 62v13M548 169v9M548 440v7M548 570v18"/>
                        <path d="M410 169h277M410 447h277M425 185v246" stroke="#a01c2c"/>
                    </g>
                    <rect x="425" y="394" width="3" height="37" fill="#22284a"/>
                    <text x="430" y="419" font-family="'DejaVu Sans Condensed', sans-serif" font-size="25" fill="#fff" stroke="#fff" stroke-width="1">JOHN SMITH</text>
                    <rect x="430" y="422" width="59" height="9" fill="#c8b9ad"/>
                    <text x="431" y="429" font-family="'DejaVu Sans Condensed', sans-serif" font-size="6" fill="#222">SR MARKETING MGR</text>
                </svg>
            </div>
            <div class="h-[53px] shrink-0 flex items-center pt-2 pl-3 border-t-8 border-[#262626] text-[#b4b4b4] shadow-[inset_0_2px_0_#111]">
                <div class="relative -mt-2">
                    <select aria-label="Magnification" class="appearance-none w-[138px] h-9 rounded bg-[#1e1e1e] border-2 border-[#303030] pl-2.5 text-[#c8c8c8]"><option>(28.6%)</option></select>
                    <svg class="absolute right-2.5 top-2.5 size-4"><use href="#i-chev"/></svg>
                </div>
                <span class="ml-2 w-1 h-8 -mt-2 bg-[#303030]"></span>
                <div class="relative ml-2.5 -mt-2">
                    <select aria-label="Resolution" class="appearance-none w-[176px] h-9 rounded bg-[#1e1e1e] border-2 border-[#303030] pl-2.5 text-[#c8c8c8]"><option>(Third)</option></select>
                    <svg class="absolute right-2.5 top-2.5 size-4"><use href="#i-chev"/></svg>
                </div>
                <span class="ml-2 w-1 h-8 -mt-2 bg-[#303030]"></span>
                <div class="flex items-center gap-[14px] ml-2 -mt-2">
                    <button aria-label="Fast previews" class="w-11 h-9 -mr-2 flex items-center justify-center rounded bg-[#1a1a1a]"><svg class="w-[30px] h-[28px]" viewBox="0 0 30 28"><path d="M20 25H2V3h26v14" fill="none" stroke="currentColor" stroke-width="2"/><path d="M17 6l-7 9h5l-2 9 8-11h-5z" fill="currentColor"/><path d="M18 20h11l-6 7z" fill="currentColor"/></svg></button>
                    <button aria-label="Transparency grid"><svg class="w-[30px] h-6" viewBox="0 0 30 24"><path d="M1 1h28v22H1z" fill="none" stroke="currentColor" stroke-width="3"/><path d="M3 3h6v6H3zM15 3h6v6h-6zM9 9h6v6H9zM21 9h6v6h-6zM3 15h6v6H3zM15 15h6v6h-6z" fill="#8c8c8c"/></svg></button>
                    <button aria-label="Mask visibility"><svg class="w-[30px] h-6" viewBox="0 0 30 24"><path d="M4 21V13L13 3h13v18z" fill="none" stroke="currentColor" stroke-width="2"/><path d="M10 1h6v5h-6zM23 1h6v5h-6zM1 18h6v5H1zM23 18h6v5h-6z" fill="currentColor"/></svg></button>
                    <button aria-label="Region of interest"><svg class="w-[30px] h-6" viewBox="0 0 30 24"><path d="M2 2h26v20H2z" fill="none" stroke="currentColor" stroke-width="2"/><path d="M9 8h13v9H9z" fill="currentColor"/></svg></button>
                    <button aria-label="Guides" class="pt-1"><svg class="w-[30px] h-7" viewBox="0 0 30 28"><path d="M3 4h24v16H3zM15 0v8M15 16v7M0 12h7M23 12h7M12 12h6M15 9v6" fill="none" stroke="currentColor" stroke-width="2"/><path d="M18 22h11l-6 6z" fill="currentColor"/></svg></button>
                </div>
                <span class="ml-4 w-1 h-8 -mt-2 bg-[#303030]"></span>
                <button aria-label="Channels" class="ml-4 -mt-2"><svg class="w-7 h-7" viewBox="0 0 28 28"><circle cx="12" cy="6" r="6" fill="#f01010"/><circle cx="7" cy="14" r="6" fill="#28b428"/><circle cx="17" cy="14" r="6" fill="#3c64f0"/><path d="M17 22h10l-5 6z" fill="currentColor"/></svg></button>
                <button aria-label="Reset exposure" class="ml-4 -mt-2"><svg class="size-6" viewBox="0 0 24 24"><circle cx="12" cy="12" r="8" fill="none" stroke="currentColor" stroke-width="7"/><path d="M12 0l3 9M24 10l-9 3M17 23l-5-7M2 19l7-5M2 5l8 3" stroke="#262626" stroke-width="2"/></svg></button>
                <span class="ml-3.5 text-[#3a9be8] -mt-2">+0.0</span>
                <span class="ml-7 w-1 h-8 -mt-2 bg-[#303030]"></span>
                <button aria-label="Snapshot" class="ml-4 -mt-2"><svg class="w-7 h-6" viewBox="0 0 28 24"><path d="M0 4h8l3-4h7l3 4h7v19H0z" fill="currentColor"/><circle cx="14" cy="13" r="5" fill="none" stroke="#262626" stroke-width="3"/></svg></button>
                <button aria-label="Show snapshot" class="ml-4 -mt-2 text-[#484848]"><svg class="w-7 h-[26px]" viewBox="0 0 28 26"><path d="M0 17q12-16 24 0-12 16-24 0z" fill="currentColor"/><circle cx="12" cy="16" r="4" fill="#262626"/><path d="M12 3h3l2-3h5l2 3h4v11l-9-3z" fill="currentColor"/></svg></button>
                <span class="ml-4 w-1 h-8 -mt-2 bg-[#303030]"></span>
                <button class="ml-2.5 w-[138px] h-9 rounded bg-[#1e1e1e] border-2 border-[#303030] text-[#a0a0a0] -mt-2">0;00;02;18</button>
                <span class="ml-2.5 w-1 h-8 -mt-2 bg-[#303030]"></span>
            </div>
        </section>

        <!-- Right dock -->
        <section class="flex">
            <div class="w-[598px] flex flex-col">
                <h2 class="h-14 shrink-0 leading-[56px] pl-6 mb-1 bg-[#262626]">Properties</h2>
                <h2 class="h-14 shrink-0 leading-[56px] pl-6 mb-1 bg-[#262626]">Info</h2>
                <h2 class="h-14 shrink-0 leading-[56px] pl-6 mb-1 bg-[#262626]">Audio</h2>
                <h2 class="h-14 shrink-0 leading-[56px] pl-6 mb-1 bg-[#262626]">Preview</h2>
                <div class="flex-1 min-h-0 flex flex-col overflow-hidden bg-[#262626]">
                    <div class="h-[58px] shrink-0 flex items-center justify-between pl-6 pr-[18px] text-[#d0d0d0]"><h2>Effects &amp; Presets</h2><svg class="w-[18px] h-4"><use href="#i-menu"/></svg></div>
                    <label class="mt-0.5 ml-3 mr-2 h-10 shrink-0 flex items-center pl-2.5 gap-2 rounded bg-[#161616] border-2 border-[#303030] text-[#b4b4b4]">
                        <svg class="w-[34px] h-[26px]"><use href="#i-find"/></svg><input type="text" aria-label="Search effects" class="flex-1 bg-transparent">
                    </label>
                    <ul id="presets" class="mt-1 border-t-2 border-black"></ul>
                </div>
            </div>
            <div class="flex-1 bg-[#1a1a1a] pt-0.5 pl-1"><div class="w-5 h-[524px] rounded-full bg-[#323232]"></div></div>
        </section>
    </main>

    <!-- Timeline -->
    <section class="h-[774px] shrink-0 mx-0.5 mb-0.5 flex flex-col bg-[#262626] border-2 border-[#2f86dc]">
        <div class="h-[52px] shrink-0 flex items-start">
            <div class="ml-5 h-[50px] pt-1 flex items-center border-b-4 border-[#b4b4b4] text-[#d0d0d0]">
                <button aria-label="Close"><svg class="size-2.5 text-[#8c8c8c]"><use href="#i-close"/></svg></button>
                <span class="ml-5 size-5 bg-[#a89874]"></span>
                <h2 class="ml-[22px]">Lower Third_01</h2>
                <svg class="ml-6 w-[18px] h-4"><use href="#i-menu"/></svg>
            </div>
            <button class="ml-[72px] h-[50px] flex items-center gap-[22px]"><span class="size-5 bg-[#a89874]"></span>Sub Title</button>
            <button class="ml-[110px] h-[50px] flex items-center gap-[22px]"><span class="size-5 bg-[#a89874]"></span>Name</button>
        </div>
        <div class="flex-1 min-h-0 flex">
            <!-- Layer list -->
            <div class="w-[1486px] shrink-0">
                <div class="h-[72px] flex items-start pl-5 text-[#b4b4b4]">
                    <div class="w-[181px] pl-1 pt-3">
                        <p class="text-[30px] leading-[30px] font-bold text-[#3a9be8]">0;00;02;18</p>
                        <p class="text-[20px] leading-6 -ml-1 text-[#1f6aa8]">00078 (29.97 fps)</p>
                    </div>
                    <label class="mt-4 w-[950px] h-10 flex items-center pl-3 gap-2 rounded bg-[#161616] border-2 border-[#303030]">
                        <svg class="w-[34px] h-[26px]"><use href="#i-find"/></svg><input type="text" aria-label="Search layers" class="flex-1 bg-transparent">
                    </label>
                    <div class="ml-[30px] mt-[22px] flex items-center">
                        <svg class="w-9 h-7" viewBox="0 0 36 28"><path d="M0 8h32M20 8v13h8" fill="none" stroke="currentColor" stroke-width="2"/><path d="M5 4h10v8H5zM24 4h10v8H24zM24 16h10v9H24z" fill="currentColor"/><path d="M26 23h10l-5 5z" fill="currentColor"/></svg>
                        <svg class="ml-[34px] w-8 h-6" viewBox="0 0 32 24"><path d="M0 13h32v11H0z" fill="#686868"/><path d="M2 13c1-4 4-3 5-6 4-9 14-9 18 0 1 3 4 2 5 6h-9l-2-2h-6l-2 2z" fill="currentColor"/><circle cx="12" cy="6" r="3" fill="#262626"/><circle cx="20" cy="6" r="3" fill="#262626"/><path d="M16 11v10" stroke="currentColor" stroke-width="5"/></svg>
                        <svg class="ml-[22px] w-7 h-7" viewBox="0 0 28 28"><path d="M8 0h20v22H8z" fill="currentColor"/><path d="M3 6v20h17" fill="none" stroke="currentColor" stroke-width="4"/><path d="M11 2v18M25 2v18" stroke="#262626" stroke-width="2" stroke-dasharray="3 2"/><path d="M14 11h8" stroke="#262626" stroke-width="2"/></svg>
                        <svg class="ml-6 size-7"><use href="#i-mblurb"/></svg>
                        <svg class="ml-9 w-8 h-[30px]" viewBox="0 0 32 30"><path d="M3 5h27v23H3z" fill="none" stroke="currentColor" stroke-width="2"/><path d="M7 9c9 0 9 15 19 14M9 0v5M16 0v5M23 0v5M0 11h3M0 18h3" fill="none" stroke="currentColor" stroke-width="2"/></svg>
                    </div>
                </div>
                <table class="w-full table-fixed border-separate border-spacing-0 text-left">
                    <colgroup><col class="w-[135px]"><col class="w-[64px]"><col class="w-[67px]"><col class="w-[259px]"><col class="w-[274px]"><col class="w-[422px]"><col class="w-[234px]"><col></colgroup>
                    <thead class="text-[20px] text-[#a0a0a0]">
                        <tr class="h-10">
                            <th class="p-0 border-y-2 border-black"><div class="h-6 pl-[11px] flex items-center gap-2.5 border-r-2 border-black text-[#b4b4b4]"><svg class="w-[22px] h-4"><use href="#i-eye"/></svg><svg class="w-6 h-6 -ml-1"><use href="#i-audio"/></svg><svg class="w-3.5 h-3.5 mr-0.5"><use href="#i-dot"/></svg><svg class="w-5 h-6"><use href="#i-lock"/></svg></div></th>
                            <th class="p-0 border-y-2 border-black"><div class="h-6 pl-7 border-r-2 border-black text-[#b4b4b4]"><svg class="size-6"><use href="#i-tag"/></svg></div></th>
                            <th class="p-0 border-y-2 border-black font-normal"><div class="h-6 leading-6 pl-2.5 border-r-2 border-black">#</div></th>
                            <th class="p-0 border-y-2 border-black font-normal"><div class="h-6 leading-6 pl-2.5 border-r-2 border-black">Layer Name</div></th>
                            <th class="p-0 border-y-2 border-black"><div class="h-6 pl-2 grid grid-cols-[repeat(8,30px)] items-center justify-items-center border-r-2 border-black text-[#b4b4b4]">
                                <svg class="w-6 h-5"><use href="#i-shy"/></svg><svg class="size-[22px]"><use href="#i-sun"/></svg><svg class="size-[22px]"><use href="#i-steps"/></svg><span class="font-['Liberation_Serif',serif] italic font-normal text-[28px] leading-6">fx</span><svg class="w-[26px] h-6"><use href="#i-frames"/></svg><svg class="w-[26px] h-6"><use href="#i-mblur"/></svg><svg class="size-5"><use href="#i-adj"/></svg><svg class="size-5"><use href="#i-cube"/></svg></div></th>
                            <th class="p-0 border-y-2 border-black font-normal"><div class="h-6 leading-6 pl-2.5 grid grid-cols-[150px_34px_168px_30px_30px] items-center border-r-2 border-black"><span>Mode</span><span>T</span><span>Track Matte</span><svg class="size-[22px] text-[#b4b4b4]"><use href="#i-hole"/></svg><svg class="size-[22px] text-[#b4b4b4]"><use href="#i-holeinv"/></svg></div></th>
                            <th class="p-0 border-y-2 border-black font-normal"><div class="h-6 leading-6 pl-2.5 border-r-2 border-black">Parent &amp; Link</div></th>
                            <th class="p-0 border-y-2 border-black"></th>
                        </tr>
                    </thead>
                    <tbody id="layers"></tbody>
                </table>
            </div>
            <!-- Time graph -->
            <div class="flex-1 min-w-0 border-l-2 border-black flex">
                <div class="flex-1 min-w-0 relative flex flex-col overflow-hidden">
                    <div class="mt-3 h-5 shrink-0 flex border-y-2 border-black">
                        <span class="w-3 rounded-l-full bg-[#2d8ceb] mr-0.5"></span><span class="flex-1 bg-[#666]"></span><span class="w-3 rounded-r-full bg-[#2d8ceb] ml-0.5"></span>
                    </div>
                    <div class="h-10 shrink-0 px-[14px]"><div id="ruler" class="relative h-full text-[20px]"></div></div>
                    <div class="h-[30px] shrink-0 flex border-t-2 border-black">
                        <span class="w-3 mr-0.5 rounded-l-full bg-[#2d8ceb]"></span>
                        <div class="relative flex-1 bg-[#5e5e5e] border-t-2 border-[#707070]" id="markers"></div>
                        <span class="w-3 ml-0.5 rounded-r-full bg-[#2d8ceb]"></span>
                    </div>
                    <div class="h-2.5 shrink-0 px-[14px] border-y-2 border-black"><div class="h-full bg-[#25c01e]"></div></div>
                    <div class="flex-1 min-h-0 bg-[#2e2e2e] px-[14px]">
                        <div class="relative h-full bg-[#353535]">
                            <div id="tracks"></div>
                            <div class="absolute inset-y-0 bg-[#1e82e1]/14" style="left:0;width:39.2%"></div>
                            <div class="absolute inset-y-0 bg-[#1e82e1]/14" style="left:79.1%;width:20.2%"></div>
                        </div>
                    </div>
                    <div class="absolute inset-0 mx-[14px] pointer-events-none">
                        <div class="absolute top-[42px] bottom-0 w-[22px] -translate-x-1/2 flex flex-col items-center" style="left:50.98%">
                            <svg class="w-[22px] h-[26px] shrink-0" viewBox="0 0 22 26"><path d="M0 0h22v14L11 26 0 14z" fill="#2d8ceb"/><path d="M8 13h6M11 13v13" stroke="#0e2a48" stroke-width="2"/></svg>
                            <span class="w-0.5 flex-1 bg-[#2d8ceb]"></span>
                        </div>
                    </div>
                </div>
                <div class="w-9 border-l border-black bg-[#222] text-[#b4b4b4] flex flex-col items-center">
                    <div class="w-full h-[112px] shrink-0 bg-[#262626] border-b-2 border-black flex items-end justify-center pb-1.5"><svg class="w-[22px] h-7" viewBox="0 0 22 28"><path d="M1 0h20v18L11 28 1 18z" fill="currentColor"/></svg></div>
                    <svg class="mt-1 w-7 h-7" viewBox="0 0 28 28"><path d="M14 2L2 17h8M14 2v10" fill="none" stroke="currentColor" stroke-width="2"/><path d="M14 6h14v14H18z" fill="currentColor"/><circle cx="13" cy="20" r="6" fill="#222" stroke="currentColor" stroke-width="2"/></svg>
                </div>
            </div>
        </div>
        <footer class="h-9 shrink-0 flex items-center pl-3.5 text-[20px] text-[#b4b4b4]">
            <div class="w-[194px] flex items-center gap-3.5 text-[#2d8ceb]">
                <svg class="size-6" viewBox="0 0 24 24"><path d="M2 2h13v13H2zM6 6h13v13H6zM9 9h13v13H9z" fill="#262626" stroke="currentColor" stroke-width="2"/></svg>
                <svg class="size-6" viewBox="0 0 24 24"><circle cx="9" cy="9" r="7" fill="none" stroke="currentColor" stroke-width="2"/><path d="M9 9h13v13H9z" fill="#262626" stroke="currentColor" stroke-width="2"/><circle cx="15" cy="15" r="3" fill="currentColor"/></svg>
                <svg class="size-6 text-[#b4b4b4]" viewBox="0 0 24 24"><path d="M8 2q-4 0-3 5 0 4-3 5 3 1 3 5-1 5 3 5M16 2q4 0 3 5 0 4 3 5-3 1-3 5 1 5-3 5M12 3v18" fill="none" stroke="currentColor" stroke-width="3"/></svg>
                <svg class="size-6 text-[#b4b4b4]" viewBox="0 0 24 24"><circle cx="9" cy="9" r="7" fill="currentColor"/><path d="M2 20h20M18 10v6" stroke="currentColor" stroke-width="3"/></svg>
            </div>
            <span class="text-[21px]">Frame Render Time</span><span class="ml-2.5 text-[22px] font-bold text-[#a6d9a0]">40ms</span>
            <div class="ml-auto w-[1950px] flex items-center gap-4">
                <svg class="w-5 h-2.5" viewBox="0 0 20 10"><path d="M0 10l7-7 3 3 4-4 6 8z" fill="currentColor"/></svg>
                <input type="range" aria-label="Timeline zoom" value="5" class="appearance-none w-[112px] h-1 bg-[#4a4a4a] [&::-webkit-slider-thumb]:appearance-none [&::-webkit-slider-thumb]:size-5 [&::-webkit-slider-thumb]:rounded-full [&::-webkit-slider-thumb]:bg-[#262626] [&::-webkit-slider-thumb]:border-3 [&::-webkit-slider-thumb]:border-[#9a9a9a]">
                <svg class="w-8 h-3.5" viewBox="0 0 32 14"><path d="M0 14L11 2l5 6 4-5 12 11z" fill="currentColor"/></svg>
            </div>
        </footer>
    </section>

    <script>
        const icon = (name, cls) => `<svg class="${cls}"><use href="#${name}"/></svg>`;

        // Toolbar: | marks a separator, * a tool with a flyout, ! a disabled tool
        const tools = ['select', 'hand', 'zoom', '|', 'orbit*!', 'pan*!', 'dolly*!', '|', 'rotate', 'anchor', '|', 'rect*', 'pen*', 'type*', '|', 'brush', 'stamp', 'eraser', '|', 'roto*', '|', 'pin*'];
        document.getElementById('tools').innerHTML =
            '<span class="h-10 w-1.5 mr-2 border-l-[6px] border-dotted border-[#3a3a3a]"></span>' +
            tools.map((t, i) => {
                if (t === '|') return '<span class="ml-1 mr-2 w-px h-10 bg-[#343434]"></span>';
                const name = t.replace(/[*!]/g, '');
                const flyout = t.includes('*') ? '<svg class="absolute right-0 bottom-0.5 size-2" viewBox="0 0 8 8"><path d="M8 0v8H0z" fill="currentColor"/></svg>' : '';
                const look = i === 0 ? 'bg-[#161616] rounded' : t.includes('!') ? 'text-[#555]' : '';
                return `<button aria-label="${name}" class="relative w-[46px] h-[42px] mr-1 flex items-center justify-center ${look}">${icon('t-' + name, 'w-[34px] h-[34px]')}${flyout}</button>`;
            }).join('');

        const swatches = [['Name Color', '#ffffff'], ['Subtitle', '#000000'], ['Subtitle Background', '#c8b9ad'], ['Bar Color', '#102a3c']];
        document.getElementById('swatches').innerHTML = swatches.map(([label, color], i) => `
            <div class="h-[62px] grid grid-cols-[421px_146px_1fr] items-center border-b-2 border-[#282828]">
                ${i === 3
                    ? '<input type="text" aria-label="Property name" value="Bar Color" class="ml-[55px] w-[334px] h-[38px] rounded bg-[#161616] border-2 border-[#303030] pl-2.5 pt-1 text-[22px] text-[#d0d0d0]">'
                    : `<label for="sw${i}" class="pl-[67px]">${label}</label>`}
                <input id="sw${i}" type="color" aria-label="${label}" value="${color}" class="appearance-none w-[82px] h-12 p-0 bg-[#1e1e1e] border-3 border-[#9a9a9a] [&::-webkit-color-swatch-wrapper]:p-px [&::-webkit-color-swatch]:border-0">
                <button aria-label="Eyedropper" class="text-[#b4b4b4]">${icon('i-dropper', 'size-7')}</button>
            </div>`).join('');

        const presets = ['* Animation Presets', '3D Channel', 'Audio', 'BCC 3D Objects', 'BCC Art Looks', 'BCC Blur', 'BCC Browser', 'BCC Color & Tone', 'BCC Film Style', 'BCC Grads & Tints', 'BCC Image Restoration', 'BCC Key & Blend', 'BCC Lens', 'BCC Lights', 'BCC Match Move', 'BCC Obsolete', 'BCC Optical Diffusion', 'BCC Particles', 'BCC Perspective', 'BCC Stylize', 'BCC Textures', 'BCC Time', 'BCC Transitions', 'BCC VR', 'BCC Warp', 'Blur & Sharpen', 'Boris FX Mocha', 'Boris FX Silhouette'];
        document.getElementById('presets').innerHTML = presets.map(p => `
            <li class="h-[34px] flex items-center gap-2.5 pl-3 border-b-2 border-[#202020]">${icon('i-right', 'w-2.5 h-4')}<span>${p.replace('&', '&amp;')}</span></li>`).join('');

        const layers = [
            { name: 'Frame Guides', label: '#6a7de0', icons: ['i-star', 'i-guide'], eye: 1, solo: 1, lock: 1, shy: 1, sun: 1, adj: 1, t: 1, matte: 'No Matte', parent: 'None', bar: '#525d8f', tail: '#4b5280' },
            { name: 'Control', label: '#b53a3a', icons: ['white'], eye: 1, solo: 1, shy: 1, fx: 1, adj: 1, t: 1, matte: 'No Matte', parent: 'None', bar: '#7a3a3a' },
            { name: 'Color Control', label: '#aba8ca', icons: ['white'], eye: 1, solo: 1, shy: 1, fx: 1, adj: 2, t: 1, matte: 'No Matte', parent: 'None', bar: '#777582' },
            { name: 'Name Matte', label: '#e4d84c', icons: ['i-star', 'i-matte'], sun: 1, matte: 'No Matte', parent: '8. bar', bar: '#928c45' },
            { name: '[Name]', label: '#e4d84c', icons: ['i-comp', 'i-matted'], eye: 1, solo: 1, shy: 1, fx: 1, mb: 1, adj: 1, t: 1, matte: '4. Name Matte', parent: '2. Control', bar: '#928c45', tail: '#56543c' },
            { name: 'Subtitle Matte', label: '#6a7de0', icons: ['i-star', 'i-matte'], sun: 1, matte: 'No Matte', parent: '8. bar', bar: '#525d8f' },
            { name: '[Sub Title]', label: '#a89874', icons: ['i-comp', 'i-matted'], eye: 1, solo: 1, shy: 1, fx: 1, mb: 1, adj: 1, t: 1, matte: '6. Subtitle Matte', parent: '2. Control', bar: '#736a5a', start: 8, tail: '#4c4842' },
            { name: 'bar', label: '#6a7de0', icons: ['i-star'], eye: 1, solo: 1, sun: 1, fx: 1, mb: 1, adj: 1, t: 1, matte: 'No Matte', parent: '2. Control', bar: '#525d8f' },
            { name: '[Light ... Solid 1]', label: '#b53a3a', icons: ['gray', 'i-guide'], shy: 1, adj: 1, t: 1, matte: 'No Matte', parent: 'None', bar: '#7a3a3a' },
        ];
        const FRAMES = 153;
        const cell = (on, inner) => `<span class="size-[26px] flex items-center justify-center ${on ? 'bg-[#1e1e1e]' : ''}">${inner || ''}</span>`;
        const menu = (value, label, cls) => `
            <span class="relative block">
                <select aria-label="${label}" class="appearance-none block h-7 bg-[#1e1e1e] text-[#d0d0d0] pl-3 pr-8 ${cls}"><option>${value}</option></select>
                ${icon('i-chev', 'absolute right-2 top-1.5 size-4 text-[#c0c0c0]')}
            </span>`;
        const layerIcon = n => {
            if (n === 'white') return '<span class="size-[26px] bg-white border-2 border-black"></span>';
            if (n === 'gray') return '<span class="size-[26px] bg-[#b4b4b4] border-2 border-black"></span>';
            if (n === 'i-comp') return icon(n, 'w-8 h-[26px] -ml-0.5 -mr-1');
            if (n === 'i-guide') return icon(n, 'size-5 mx-[3px]');
            return icon(n, 'size-[26px]');
        };
        document.getElementById('layers').innerHTML = layers.map((l, i) => {
            const td = 'h-[34px] p-0 border-b-2 border-[#262626]';
            const hasMatte = !l.matte.startsWith('No');
            return `<tr class="bg-[#303030] text-[#b4b4b4]">
                <td class="${td}"><div class="pl-2 flex gap-1">${cell(1, l.eye && icon('i-eye', 'w-[22px] h-4'))}${cell(0)}${cell(l.solo)}${cell(1, l.lock && icon('i-lock', 'w-5 h-6'))}</div></td>
                <td class="${td}"><div class="pl-3 flex items-center gap-3">${icon('i-right', 'w-2.5 h-4')}<span class="size-6" style="background:${l.label}"></span></div></td>
                <td class="${td} pl-3.5 font-bold text-[#a0a0a0]">${i + 1}</td>
                <td class="${td}"><div class="pl-[5px] flex items-center gap-1.5 font-bold text-[#a0a0a0] whitespace-nowrap"><span class="flex gap-1.5 items-center text-[#b4b4b4]">${l.icons.map(layerIcon).join('')}</span><span class="pl-1.5">${l.name}</span></div></td>
                <td class="${td}"><div class="pl-[9px] flex gap-1">
                    ${cell(1, icon(l.shy ? 'i-shy' : 'i-shyoff', 'w-6 h-5'))}
                    ${cell(1, l.sun && icon('i-sun', 'size-5 text-[#7a7a7a]'))}
                    ${cell(1, icon('i-slash', 'size-[22px]'))}
                    ${cell(l.fx, l.fx && '<span class="font-[\'Liberation_Serif\',serif] italic text-[28px] leading-6">fx</span>')}
                    ${cell(0)}
                    ${cell(1, l.mb && icon('i-mblur', 'w-[26px] h-6'))}
                    ${cell(l.adj, l.adj === 2 && icon('i-adj', 'size-5'))}
                    ${cell(1)}
                </div></td>
                <td class="${td}"><div class="pl-[7px] flex items-center">
                    ${menu('Normal', 'Mode', 'w-[136px]')}
                    <span class="ml-2.5">${cell(l.t)}</span>
                    <span class="ml-2.5 mr-[7px]">${icon('i-whip', 'w-6 h-6')}</span>
                    ${menu(l.matte, 'Track matte', 'w-[136px]')}
                    <span class="ml-1 flex gap-1">${hasMatte ? cell(1, icon('i-hole', 'size-[22px]')) + cell(1) : ''}</span>
                </div></td>
                <td class="${td}"><div class="pl-2.5 flex items-center gap-[13px]">
                    ${icon('i-whip', 'w-6 h-6')}
                    ${menu(l.parent, 'Parent', 'w-[178px]')}
                </div></td>
                <td class="${td}"></td>
            </tr>`;
        }).join('');

        document.getElementById('tracks').innerHTML = layers.map(l => {
            const start = l.start || 0;
            const tail = l.tail ? `<span class="absolute left-full top-0 w-3.5 h-8" style="background:${l.tail}"></span>` : '';
            return `<div class="relative h-[34px] border-b-2 border-[#262626] ${start ? 'bg-[#3e4449]' : ''}"><div class="h-full mr-0.5 border-t-2 border-b-3 border-t-white/8 border-b-black/15" style="background-color:${l.bar};margin-left:${start / FRAMES * 100}%"></div>${tail}</div>`;
        }).join('');

        let ruler = '';
        for (let f = 0; f <= 150; f += 10) {
            const major = f % 30 === 0;
            const text = major ? String(f / 30).padStart(2, '0') + ':00f' : (f % 30) + 'f';
            ruler += `<span class="absolute top-0.5 bottom-0.5 w-20 -translate-x-1/2 flex flex-col items-center justify-between" style="left:${f / FRAMES * 100}%"><span class="leading-6">${text}</span><span class="w-0.5 bg-[#8c8c8c] ${major ? 'h-3.5' : 'h-2.5'}"></span></span>`;
        }
        document.getElementById('ruler').innerHTML = ruler;

        // Protected regions and their comp markers
        const handle = (f, flip) => `<svg class="absolute bottom-0 w-3 h-6 ${flip ? '-scale-x-100 -translate-x-full' : ''}" style="left:${f / FRAMES * 100}%" viewBox="0 0 12 24"><path d="M1 1h10L8 23H1z" fill="#2d8ceb" stroke="#000" stroke-width="2"/><path d="M5 5v3" stroke="#000" stroke-width="2"/></svg>`;
        document.getElementById('markers').innerHTML = [[0, 60, 1], [121, 152, 2]].map(([a, b, n]) => `
            <div class="absolute inset-y-0 bg-[#566b82] border-b-4 border-[#2d8ceb]" style="left:${a / FRAMES * 100}%;width:${(b - a) / FRAMES * 100}%"><span class="block w-9 h-6 leading-5 text-center text-[20px] text-[#b8cfe6] bg-[#456f9c] border-2 border-[#1e2c3c] rounded-sm">${n}</span></div>
            ${handle(a, true)}${handle(b, false)}`).join('');
    </script>
</body>
</html>
